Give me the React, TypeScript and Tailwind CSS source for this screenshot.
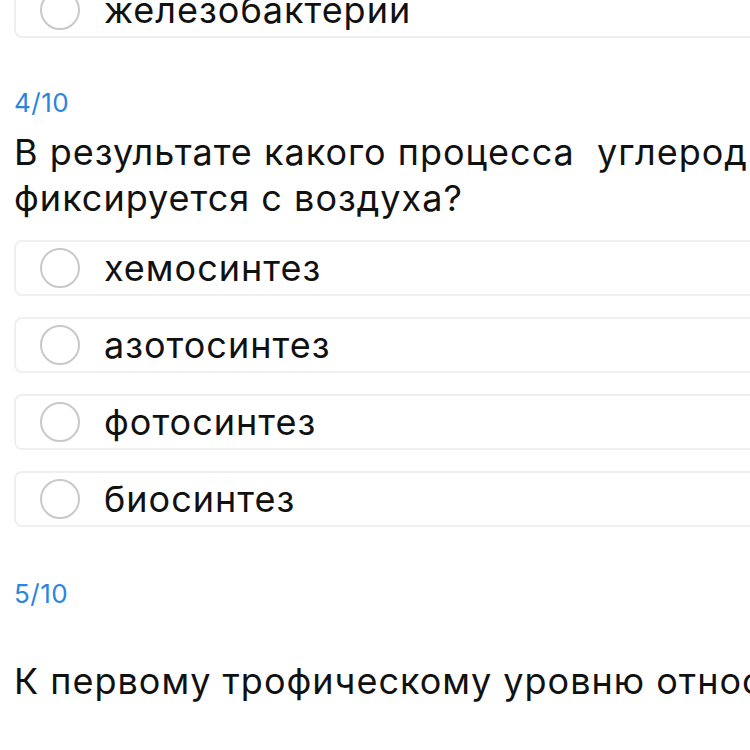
import React from "react"

const font = { fontFamily: "Inter, 'Liberation Sans', Arial, sans-serif" }

function Option({ label }: { label: string }) {
  return (
    <div className="flex h-[56px] w-[900px] shrink-0 items-center rounded-[8px] border-2 border-[#efefef] bg-white pl-[24px]">
      <div className="h-[40px] w-[40px] shrink-0 rounded-full border-2 border-[#c9c9c9]" />
      <span className="ml-[24px] text-[36px] leading-none tracking-[1px] text-[#111]">{label}</span>
    </div>
  )
}

export default function App() {
  return (
    <div className="h-[750px] w-[750px] overflow-hidden bg-white" style={font}>
      <div className="flex flex-col pl-[14px]">
        <div className="-mt-[18px]">
          <Option label="железобактерии" />
        </div>

        <div className="mt-[50px] h-[30px] text-[26px] leading-[30px] tracking-[0.5px] text-[#2a85e0]">4/10</div>

        <div className="mt-[11px] text-[36px] leading-[46px] tracking-[1px] text-[#111]">
          В результате какого процесса&nbsp; углерод
          <br />
          фиксируется с воздуха?
        </div>

        <div className="mt-[19px] flex flex-col gap-[21px]">
          <Option label="хемосинтез" />
          <Option label="азотосинтез" />
          <Option label="фотосинтез" />
          <Option label="биосинтез" />
        </div>

        <div className="mt-[52px] h-[30px] text-[26px] leading-[30px] tracking-[0.5px] text-[#2a85e0]">5/10</div>

        <div className="mt-[49px] whitespace-nowrap text-[36px] leading-[46px] tracking-[1px] text-[#111]">
          К первому трофическому уровню относятся
        </div>
      </div>
    </div>
  )
}
